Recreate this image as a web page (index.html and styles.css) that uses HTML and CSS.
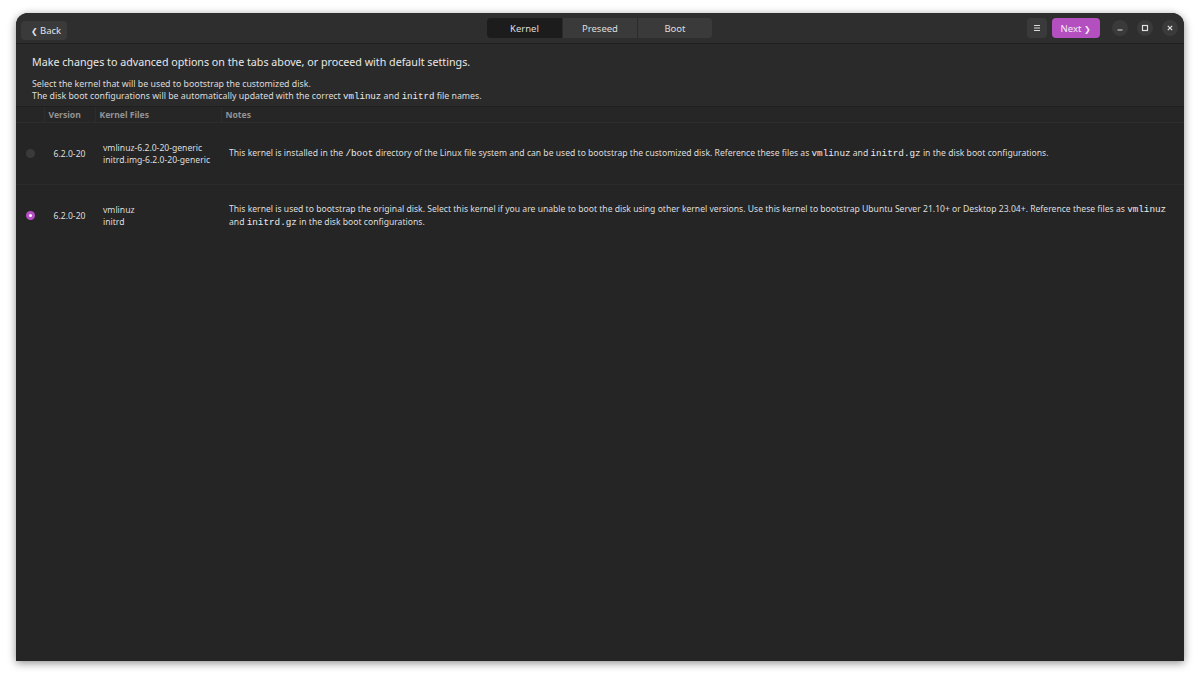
FILE: index.html
```html
<!DOCTYPE html>
<html lang="en">
<head>
    <meta charset="UTF-8">
    <meta name="viewport" content="width=device-width, initial-scale=1.0">
    <title>Kernel</title>
    <link rel="stylesheet" href="styles.css">
</head>
<body>

<div class="window">
    <header class="headerbar">
        <div class="bar-start">
            <button class="btn btn-back"><span class="chev">&#10094;</span>Back</button>
        </div>

        <nav class="tabs">
            <button class="tab active">Kernel</button>
            <button class="tab">Preseed</button>
            <button class="tab">Boot</button>
        </nav>

        <div class="bar-end">
            <button class="btn btn-menu">
                <svg width="10" height="10" viewBox="0 0 10 10">
                    <path d="M2 2.5h6M2 5h6M2 7.5h6" stroke="#d8d8d8" stroke-width="1"/>
                </svg>
            </button>
            <button class="btn btn-next">Next<span class="chev">&#10095;</span></button>
            <div class="controls">
                <span class="ctl">
                    <svg width="8" height="8" viewBox="0 0 8 8"><path d="M1.5 6h5" stroke="#e0e0e0" stroke-width="1.2"/></svg>
                </span>
                <span class="ctl">
                    <svg width="8" height="8" viewBox="0 0 8 8"><rect x="1.5" y="1.5" width="5" height="5" fill="none" stroke="#e0e0e0" stroke-width="1.2"/></svg>
                </span>
                <span class="ctl">
                    <svg width="8" height="8" viewBox="0 0 8 8"><path d="M1.8 1.8l4.4 4.4M6.2 1.8l-4.4 4.4" stroke="#e0e0e0" stroke-width="1.2"/></svg>
                </span>
            </div>
        </div>
    </header>

    <section class="intro">
        <h1>Make changes to advanced options on the tabs above, or proceed with default settings.</h1>
        <p>Select the kernel that will be used to bootstrap the customized disk.<br>
        The disk boot configurations will be automatically updated with the correct <code>vmlinuz</code> and <code>initrd</code> file names.</p>
    </section>

    <main class="list">
        <table>
            <colgroup>
                <col class="c-radio">
                <col class="c-version">
                <col class="c-files">
                <col>
            </colgroup>
            <thead>
                <tr>
                    <th></th>
                    <th>Version</th>
                    <th>Kernel Files</th>
                    <th>Notes</th>
                </tr>
            </thead>
            <tbody>
                <tr>
                    <td><span class="radio"></span></td>
                    <td class="version">6.2.0-20</td>
                    <td class="files">vmlinuz-6.2.0-20-generic<br>initrd.img-6.2.0-20-generic</td>
                    <td class="notes">This kernel is installed in the <code>/boot</code> directory of the Linux file system and can be used to bootstrap the customized disk. Reference these files as <code>vmlinuz</code> and <code>initrd.gz</code> in the disk boot configurations.</td>
                </tr>
                <tr>
                    <td><span class="radio checked"></span></td>
                    <td class="version">6.2.0-20</td>
                    <td class="files">vmlinuz<br>initrd</td>
                    <td class="notes">This kernel is used to bootstrap the original disk. Select this kernel if you are unable to boot the disk using other kernel versions. Use this kernel to bootstrap Ubuntu Server 21.10+ or Desktop 23.04+. Reference these files as <code>vmlinuz</code> and <code>initrd.gz</code> in the disk boot configurations.</td>
                </tr>
            </tbody>
        </table>
    </main>
</div>

</body>
</html>
```

FILE: styles.css
```css
body {
    margin: 0;
    padding: 13px 16px 18px;
    background-color: #ffffff;
    font-family: 'Noto Sans', 'Open Sans', sans-serif;
    color: #dedede;
}

.window {
    height: 648px;
    display: flex;
    flex-direction: column;
    background-color: #252525;
    border-radius: 12px 12px 0 0;
    box-shadow: 0 2px 8px rgba(0, 0, 0, 0.45);
    overflow: hidden;
}

/* barra superior */
.headerbar {
    height: 30px;
    flex: none;
    display: grid;
    grid-template-columns: 1fr auto 1fr;
    align-items: center;
    padding: 0 6px 0 5px;
    background-color: #2e2e2e;
    border-bottom: 1px solid #1f1f1f;
}

.bar-end {
    display: flex;
    align-items: center;
    justify-content: flex-end;
}

.btn {
    height: 19px;
    border: none;
    border-radius: 4px;
    background-color: #3a3a3a;
    color: #e2e2e2;
    font-family: inherit;
    font-size: 9.5px;
    padding: 0 6px;
    display: inline-flex;
    align-items: center;
    cursor: pointer;
}

.btn-back {
    width: 46px;
    padding-left: 10px;
}

.btn-back .chev {
    font-size: 8px;
    margin-right: 2px;
}

.btn-menu {
    width: 20px;
    height: 20px;
    justify-content: center;
    padding: 0;
}

.btn-next {
    width: 48px;
    height: 20px;
    margin-left: 5px;
    justify-content: center;
    background-color: #b34fbf;
    color: #f6e9f8;
}

.btn-next .chev {
    font-size: 8px;
    margin-left: 3px;
}

.tabs {
    display: flex;
    border-radius: 4px;
    overflow: hidden;
}

.tab {
    width: 75px;
    height: 20px;
    border: none;
    border-left: 1px solid #2c2c2c;
    background-color: #3a3a3a;
    color: #dddddd;
    font-family: inherit;
    font-size: 9.5px;
    cursor: pointer;
}

.tab:first-child {
    border-left: none;
}

.tab.active {
    background-color: #1c1c1c;
}

.controls {
    display: flex;
    gap: 9px;
    margin-left: 12px;
}

.ctl {
    width: 16px;
    height: 16px;
    border-radius: 50%;
    background-color: #3a3a3a;
    display: flex;
    align-items: center;
    justify-content: center;
}

/* texto de introduccion */
.intro {
    flex: none;
    height: 63px;
    box-sizing: border-box;
    padding: 11px 16px 0;
    background-color: #2a2a2a;
    border-bottom: 1px solid #1f1f1f;
}

.intro h1 {
    margin: 0 0 9px;
    font-size: 10.7px;
    font-weight: normal;
    color: #e8e8e8;
}

.intro p {
    margin: 0;
    font-size: 8.8px;
    line-height: 12px;
    color: #dcdcdc;
}

code {
    font-family: 'Liberation Mono', 'DejaVu Sans Mono', monospace;
    font-size: 9.3px;
    color: #ececec;
}

.intro code {
    font-size: 9.1px;
}

/* tabla */
.list {
    flex: 1;
}

table {
    width: 100%;
    border-collapse: collapse;
    table-layout: fixed;
}

.c-radio { width: 28px; }
.c-version { width: 51px; }
.c-files { width: 126px; }

th {
    height: 15px;
    padding: 0 4px;
    text-align: left;
    font-size: 8.6px;
    font-weight: bold;
    color: #939393;
    background-color: #262626;
    border-left: 1px solid #2c2c2c;
    border-bottom: 1px solid #2d2d2d;
}

th:first-child {
    border-left: none;
}

td {
    height: 61px;
    padding: 0 8px;
    font-size: 8.6px;
    line-height: 12px;
    color: #dedede;
    border-bottom: 1px solid #2b2b2b;
}

tbody tr:last-child td {
    border-bottom: none;
}

td:first-child {
    padding: 0 0 0 10px;
}

td.version {
    padding: 0;
    text-align: center;
}

.radio {
    display: block;
    width: 9px;
    height: 9px;
    border-radius: 50%;
    background-color: #3a3a3a;
}

.radio.checked {
    background-color: #b54ec4;
    position: relative;
}

.radio.checked::after {
    content: '';
    position: absolute;
    left: 3px;
    top: 3px;
    width: 3px;
    height: 3px;
    border-radius: 50%;
    background-color: #ffffff;
}
```
